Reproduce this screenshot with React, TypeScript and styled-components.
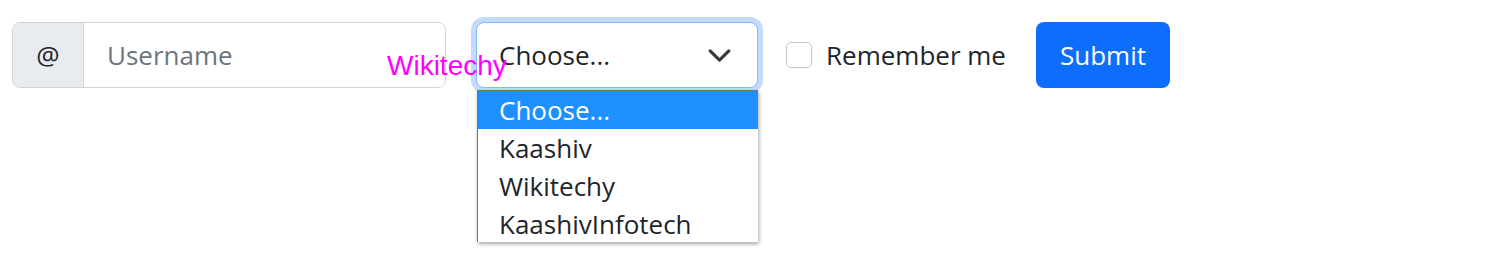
import React from 'react';
import styled, { createGlobalStyle } from 'styled-components';

const GlobalStyle = createGlobalStyle`
  html, body {
    margin: 0;
    background: #fff;
    font-family: "Open Sans", "Noto Sans", sans-serif;
    color: #212529;
  }
`;

const options = ['Choose...', 'Kaashiv', 'Wikitechy', 'KaashivInfotech'];

export default function App() {
  return (
    <>
      <GlobalStyle />
      <Page>
        <Form>
          <InputGroup>
            <Addon>@</Addon>
            <TextInput placeholder="Username" />
          </InputGroup>
          <SelectWrap>
            <FloatLabel>Wikitechy</FloatLabel>
            <SelectBox>
              <span>Choose...</span>
              <svg width="25" height="25" viewBox="0 0 16 16" fill="none">
                <path d="M2 5l6 6 6-6" stroke="#343a40" strokeWidth="2" strokeLinecap="round" strokeLinejoin="round" />
              </svg>
            </SelectBox>
            <OptionList>
              {options.map((o, i) => (
                <OptionRow key={o} $active={i === 0}>{o}</OptionRow>
              ))}
            </OptionList>
          </SelectWrap>
          <CheckRow>
            <CheckBox />
            <CheckLabel>Remember me</CheckLabel>
          </CheckRow>
          <SubmitButton>Submit</SubmitButton>
        </Form>
      </Page>
    </>
  );
}

const Page = styled.div`
  min-height: 271px;
  padding: 22px 12px;
  box-sizing: border-box;
`;

const Form = styled.form`
  display: flex;
  align-items: center;
  gap: 30px;
  font-size: 26px;
`;

const InputGroup = styled.div`
  display: flex;
  width: 434px;
  height: 66px;
  box-sizing: border-box;
  border: 1px solid #ced4da;
  border-radius: 8px;
  overflow: hidden;
`;

const Addon = styled.div`
  display: flex;
  align-items: center;
  justify-content: center;
  width: 70px;
  background: #e9ecef;
  border-right: 1px solid #ced4da;
  color: #212529;
`;

const TextInput = styled.input`
  flex: 1;
  min-width: 0;
  border: none;
  outline: none;
  padding: 0 23px;
  font: inherit;
  color: #212529;
  &::placeholder {
    color: #6c757d;
  }
`;

const SelectWrap = styled.div`
  position: relative;
  width: 282px;
`;

const FloatLabel = styled.label`
  position: absolute;
  left: -89px;
  top: 30px;
  font-family: "Liberation Sans", Arial, sans-serif;
  font-size: 28px;
  line-height: 1;
  color: #ff00ff;
  z-index: 2;
  pointer-events: none;
`;

const SelectBox = styled.div`
  display: flex;
  align-items: center;
  justify-content: space-between;
  height: 66px;
  box-sizing: border-box;
  padding: 0 25px 0 22px;
  border: 1px solid #86b7fe;
  border-radius: 8px;
  box-shadow: 0 0 0 5px #c2dbfe;
  background: #fff;
`;

const OptionList = styled.ul`
  position: absolute;
  top: 68px;
  left: 1px;
  width: 281px;
  height: 152px;
  margin: 0;
  padding: 0;
  list-style: none;
  background: #fff;
  border-left: 1px solid #767676;
  border-top: 1px solid #767676;
  box-shadow: 1px 2px 4px rgba(0, 0, 0, 0.35);
  overflow: hidden;
  box-sizing: border-box;
  z-index: 3;
`;

const OptionRow = styled.li<{ $active?: boolean }>`
  height: 38px;
  line-height: 38px;
  padding-left: 21px;
  background: ${(p) => (p.$active ? '#1e90ff' : '#fff')};
  color: ${(p) => (p.$active ? '#fff' : '#212529')};
`;

const CheckRow = styled.div`
  display: flex;
  align-items: center;
  gap: 14px;
`;

const CheckBox = styled.span`
  display: block;
  width: 26px;
  height: 26px;
  margin-left: -2px;
  box-sizing: border-box;
  border: 1px solid #c4c8cc;
  border-radius: 5px;
  background: #fff;
`;

const CheckLabel = styled.label`
  color: #212529;
`;

const SubmitButton = styled.button`
  height: 66px;
  padding: 0 24px;
  border: none;
  border-radius: 8px;
  background: #0d6efd;
  color: #fff;
  font: inherit;
`;
